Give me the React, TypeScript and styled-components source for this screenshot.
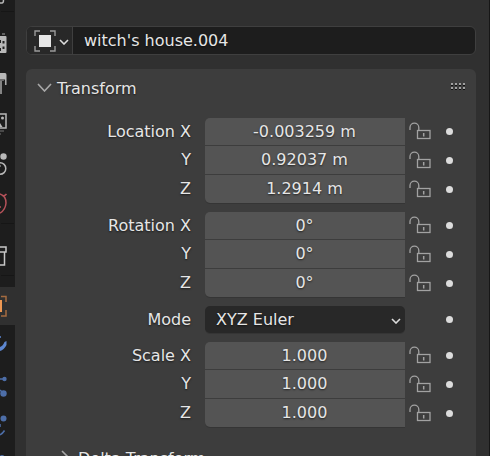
import React from "react";
import styled, { createGlobalStyle, css } from "styled-components";

const GlobalStyle = createGlobalStyle`
  * { box-sizing: border-box; }
  body {
    margin: 0;
    background: #303030;
    color: #e6e6e6;
    font: 16px/20px "DejaVu Sans", sans-serif;
  }
  button, input, select { font: inherit; color: inherit; margin: 0; }
`;

const textShadow = css`
  text-shadow: 0 1px 2px rgba(0, 0, 0, 0.6);
`;

const plainButton = css`
  display: flex;
  align-items: center;
  padding: 0;
  border: 0;
  background: none;
  cursor: pointer;
`;

const Editor = styled.div`
  display: flex;
  height: 100vh;
  overflow: hidden;
  border-right: 1px solid #161616;
`;

const TabStrip = styled.nav`
  display: flex;
  flex-direction: column;
  flex: none;
  gap: 12px;
  width: 15px;
  background: #1d1d1d;
  overflow: hidden;
`;

const TabGroup = styled.div`
  display: flex;
  flex-direction: column;
  flex: none;
  box-shadow: 0 2px 0 -1px #161616;
`;

const Tab = styled.button<{ $active?: boolean; $height?: number }>`
  ${plainButton}
  height: ${(p) => p.$height ?? 40}px;
  background: ${(p) => (p.$active ? "#303030" : "transparent")};
  svg { flex: none; }
`;

const Main = styled.main`
  display: flex;
  flex-direction: column;
  flex: 1;
  gap: 14px;
  min-width: 0;
  padding: 26px 13px 0 11px;
`;

const NameBar = styled.div`
  display: flex;
  flex: none;
  height: 29px;
  border: 1px solid #3f3f3f;
  border-radius: 6px;
  background: #1d1d1d;
  overflow: hidden;
`;

const TypeButton = styled.button`
  ${plainButton}
  flex: none;
  gap: 3px;
  width: 46px;
  padding-left: 7px;
  border-right: 1px solid #3f3f3f;
  background: #282828;
  svg:last-child { margin-top: 2px; }
`;

const NameInput = styled.input`
  ${textShadow}
  flex: 1;
  min-width: 0;
  padding: 0 11px;
  border: 0;
  background: none;
  outline: none;
`;

const Panel = styled.section`
  flex: none;
  min-height: 400px;
  border-radius: 6px 6px 0 0;
  background: #3d3d3d;
`;

const PanelHeader = styled.header<{ $nested?: boolean }>`
  display: flex;
  align-items: center;
  justify-content: space-between;
  height: 38px;
  margin-top: ${(p) => (p.$nested ? 12 : 0)}px;
  padding: 2px 11px 0 ${(p) => (p.$nested ? 32 : 11)}px;
  > svg { margin-bottom: 4px; }
`;

const PanelToggle = styled.button`
  ${plainButton}
  ${textShadow}
  gap: 5px;
  svg { margin-bottom: 4px; }
`;

const Properties = styled.div`
  display: flex;
  flex-direction: column;
  gap: 9px;
  padding-top: 11px;
`;

const Group = styled.div<{ $single?: boolean }>`
  display: grid;
  grid-template-rows: ${(p) => (p.$single ? "27px" : "27px 28px 28px")};
  row-gap: 1px;
`;

const Row = styled.div`
  display: grid;
  grid-template-columns: 165px 1fr 30px 28px;
  align-items: stretch;
  padding-right: 13px;
`;

const Label = styled.label`
  ${textShadow}
  display: flex;
  align-items: center;
  justify-content: flex-end;
`;

const NumberInput = styled.input<{ $first: boolean; $last: boolean }>`
  ${textShadow}
  min-width: 0;
  margin-left: 14px;
  padding: 0 1px 0 0;
  border: 0;
  border-radius: ${(p) => (p.$first ? "5px 0 0 0" : p.$last ? "0 0 0 5px" : "0")};
  background: #545454;
  box-shadow: ${(p) => (p.$last ? "0 1px 0 #353535" : "none")};
  text-align: center;
  outline: none;
`;

const SelectBox = styled.div`
  display: grid;
  align-items: center;
  margin-left: 14px;
  border-radius: 5px;
  background: #282828;
  box-shadow: 0 1px 0 #353535;
  > * { grid-area: 1 / 1; }
  svg { justify-self: end; margin: 3px 4px 0 0; pointer-events: none; }
`;

const Select = styled.select`
  ${textShadow}
  width: 100%;
  height: 100%;
  padding: 0 28px 0 11px;
  border: 0;
  background: none;
  appearance: none;
  outline: none;
`;

const LockButton = styled.button`
  ${plainButton}
  padding: 1px 0 0 4px;
`;

const KeyButton = styled.button`
  ${plainButton}
  grid-column: 4;
  justify-content: center;
`;

const Dot = styled.span`
  width: 7px;
  height: 7px;
  border-radius: 50%;
  background: #dcdcdc;
`;

const Chevron = ({ width = 10, height = 6, color = "#dcdcdc" }) => (
  <svg width={width} height={height} fill="none" stroke={color} strokeWidth="1.6">
    <path d={`M1 1 L${width / 2} ${height - 1} L${width - 1} 1`} />
  </svg>
);

const ChevronRight = () => (
  <svg width="15" height="16" fill="none" stroke="#a8a8a8" strokeWidth="1.6">
    <path d="M4 2 L11 9 L4 16" />
  </svg>
);

const ObjectIcon = () => (
  <svg width="22" height="22">
    <path
      d="M1 6V1H6M16 1H21V6M21 16V21H16M6 21H1V16"
      fill="none"
      stroke="#9a9a9a"
      strokeWidth="1.4"
    />
    <rect x="5" y="5" width="12" height="12" fill="#e6e6e6" />
  </svg>
);

const LockIcon = () => (
  <svg width="22" height="20" fill="none" stroke="#a2a2a2" strokeWidth="1.3">
    <path d="M1 8V5.500A4.400 4.400 0 0 1 9.800 5.500V9" />
    <rect x="8.500" y="8.500" width="12.500" height="8" />
    <path d="M14.700 11V14.500" strokeWidth="1.500" />
  </svg>
);

const Grip = () => (
  <svg width="14" height="8">
    {[0, 4].map((y) =>
      [0, 4, 8, 12].map((x) => (
        <g key={`${x}-${y}`}>
          <rect x={x} y={y} width="2" height="2" fill="#a0a0a0" />
          <rect x={x} y={y + 2} width="2" height="1" fill="#101010" />
        </g>
      ))
    )}
  </svg>
);

const light = "#b8b8b8";
const blue = "#4d6ea8";

type TabItem = { name: string; icon: React.ReactNode; height?: number; active?: boolean };

const tabGroups: TabItem[][] = [
  [
    {
      name: "Tool",
      height: 11,
      icon: <path d="M0 3H2Q3.500 3 3.500 0" fill="none" stroke={light} strokeWidth="1.500" />,
    },
  ],
  [
    {
      name: "Render",
      icon: (
        <>
          <path d="M2 11H5" stroke="#777" strokeWidth="1.500" />
          <rect x="-4" y="13" width="10.500" height="17" rx="1" fill={light} />
          <path
            d="M2.500 18H4.500V20.500H2.500ZM2.500 23.500H4.500V26H2.500ZM0 17H1V20H0ZM0 25H1V28H0Z"
            fill="#222"
          />
        </>
      ),
    },
    {
      name: "Output",
      icon: (
        <>
          <path d="M0 10H5Q6.500 10 6.500 12V22H4V18H0Z" fill={light} />
          <path d="M0 17H4.500V22" fill="none" stroke="#222" strokeWidth="1.200" />
          <rect x="0" y="18" width="2" height="13" fill="#858585" />
        </>
      ),
    },
    {
      name: "View Layer",
      icon: (
        <>
          <path d="M0 11H6V25H0" fill="none" stroke={light} strokeWidth="1.500" />
          <circle cx="2.500" cy="15" r="1.500" fill={light} />
          <path d="M0 20L2.500 24H0Z" fill={light} />
          <path d="M0 28H4M0 31H1" stroke="#777" strokeWidth="1.200" />
        </>
      ),
    },
    {
      name: "Scene",
      icon: (
        <>
          <circle cx="3.500" cy="13.500" r="3.200" fill={light} />
          <circle cx="0" cy="25.500" r="5.800" fill="none" stroke={light} strokeWidth="1.500" />
          <path d="M0 23H1" stroke={light} />
        </>
      ),
    },
    {
      name: "World",
      icon: (
        <g fill="none" stroke="#b5525a" strokeWidth="1.500">
          <path d="M0 11Q6 13 6 20Q5.500 27 0 30M2.500 13Q5 13 6.500 11M0 23V25" />
        </g>
      ),
    },
  ],
  [
    {
      name: "Collection",
      icon: (
        <g fill="none" stroke="#c8c8c8" strokeWidth="1.500">
          <path d="M0 12H6V17H0M4.500 17V30H0" />
        </g>
      ),
    },
  ],
  [
    {
      name: "Object",
      height: 38,
      active: true,
      icon: (
        <>
          <path d="M1 9.500H6V15M6 23V29H1" fill="none" stroke="#a46b40" strokeWidth="1.500" />
          <rect x="0" y="13" width="2" height="12" fill="#ee9853" />
        </>
      ),
    },
    {
      name: "Modifiers",
      icon: (
        <>
          <path d="M6.500 16V20Q4 25 0 26V22Q3 21 4.500 17Z" fill="#5d87d0" />
          <rect x="0" y="11" width="1" height="2" fill={blue} />
        </>
      ),
    },
    {
      name: "Particles",
      icon: (
        <>
          <path d="M0 14H4M0 25L3 28" stroke={blue} strokeWidth="1.500" />
          <circle cx="4.500" cy="14" r="2.200" fill={blue} />
          <circle cx="3.500" cy="28.500" r="3.200" fill={blue} />
        </>
      ),
    },
    {
      name: "Physics",
      icon: (
        <>
          <circle cx="3.500" cy="13.500" r="3" fill={blue} />
          <path d="M4.500 25.500Q3 28 0 30M0 19V22" fill="none" stroke={blue} strokeWidth="1.500" />
        </>
      ),
    },
    {
      name: "Constraints",
      icon: <circle cx="2" cy="12.500" r="2.500" fill={blue} />,
    },
  ],
];

const groups = [
  { name: "Location", values: ["-0.003259 m", "0.92037 m", "1.2914 m"] },
  { name: "Rotation", values: ["0°", "0°", "0°"] },
  { name: "Scale", values: ["1.000", "1.000", "1.000"] },
];

const VectorGroup = ({ name, values }: { name: string; values: string[] }) => (
  <Group>
    {values.map((value, i) => {
      const axis = "XYZ"[i];
      const id = `${name}-${axis}`;
      return (
        <Row key={id}>
          <Label htmlFor={id}>{i === 0 ? `${name} ${axis}` : axis}</Label>
          <NumberInput
            id={id}
            defaultValue={value}
            $first={i === 0}
            $last={i === values.length - 1}
          />
          <LockButton aria-label={`Lock ${name} ${axis}`}>
            <LockIcon />
          </LockButton>
          <KeyButton aria-label={`Animate ${name} ${axis}`}>
            <Dot />
          </KeyButton>
        </Row>
      );
    })}
  </Group>
);

export default function App() {
  return (
    <>
      <GlobalStyle />
      <Editor>
        <TabStrip aria-label="Properties">
          {tabGroups.map((tabs, i) => (
            <TabGroup key={i}>
              {tabs.map((tab) => (
                <Tab
                  key={tab.name}
                  aria-label={tab.name}
                  $active={tab.active}
                  $height={tab.height}
                >
                  <svg width="15" height={tab.height ?? 40}>
                    {tab.icon}
                  </svg>
                </Tab>
              ))}
            </TabGroup>
          ))}
        </TabStrip>
        <Main>
          <NameBar>
            <TypeButton aria-label="Object type">
              <ObjectIcon />
              <Chevron />
            </TypeButton>
            <NameInput aria-label="Object name" defaultValue="witch's house.004" />
          </NameBar>
          <Panel>
            <PanelHeader>
              <PanelToggle aria-expanded="true">
                <Chevron width={15} height={9} color="#a8a8a8" />
                Transform
              </PanelToggle>
              <Grip />
            </PanelHeader>
            <Properties>
              <VectorGroup {...groups[0]} />
              <VectorGroup {...groups[1]} />
              <Group $single>
                <Row>
                  <Label htmlFor="mode">Mode</Label>
                  <SelectBox>
                    <Select id="mode" defaultValue="XYZ Euler">
                      <option>XYZ Euler</option>
                    </Select>
                    <Chevron />
                  </SelectBox>
                  <KeyButton aria-label="Animate Mode">
                    <Dot />
                  </KeyButton>
                </Row>
              </Group>
              <VectorGroup {...groups[2]} />
            </Properties>
            <PanelHeader $nested>
              <PanelToggle aria-expanded="false">
                <ChevronRight />
                Delta Transform
              </PanelToggle>
            </PanelHeader>
          </Panel>
        </Main>
      </Editor>
    </>
  );
}
